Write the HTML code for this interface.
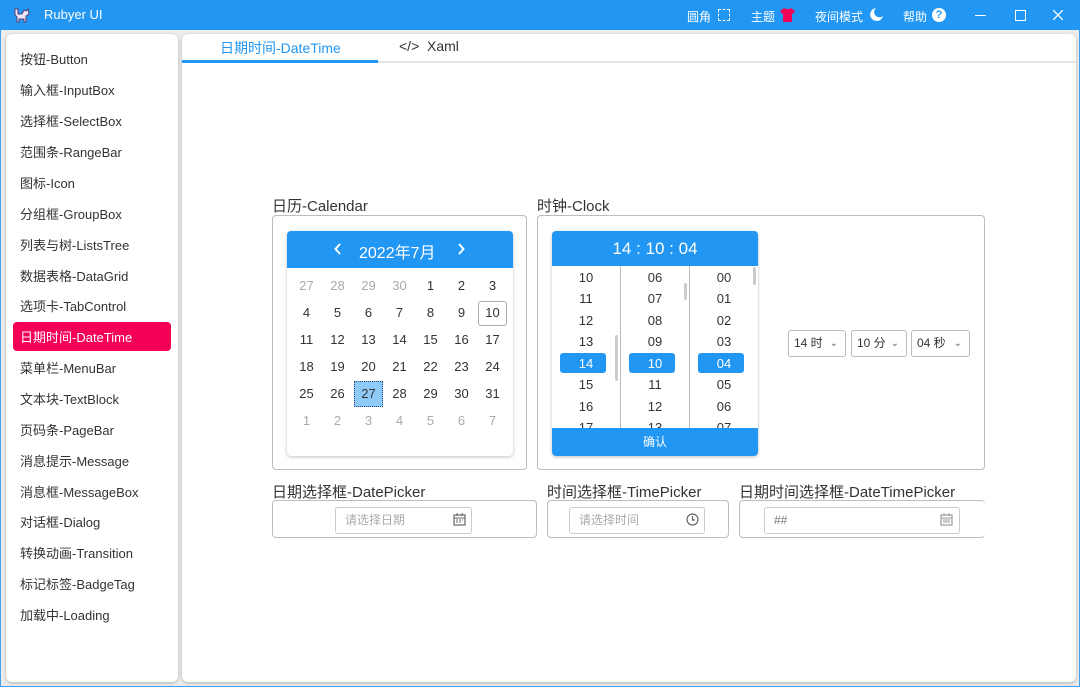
<!DOCTYPE html>
<html><head><meta charset="utf-8"><style>
*{box-sizing:border-box;margin:0;padding:0}
body{width:1080px;height:687px;overflow:hidden;background:#ececec;font-family:"Liberation Sans","Noto Sans CJK SC",sans-serif;color:#333;position:relative}
.abs{position:absolute}
.title{left:0;top:0;width:1080px;height:30px;background:#2196f3;color:#fff}
.frame{left:0;top:30px;width:1080px;height:657px;border:1px solid #3fa0f5;border-top:none}
.card{background:#fff;border-radius:6px;box-shadow:0 1px 3px rgba(0,0,0,.25)}
.nav{font-size:13px;color:#333;left:20px}
.grp{border:1px solid #bdbdbd;border-radius:4px;background:#fff}
.lbl{font-size:15px;color:#333}
.d{position:absolute;width:31px;text-align:center;font-size:13px;color:#333}
.g{color:#aaa}
.t{position:absolute;width:68px;text-align:center;font-size:13px;color:#333}
.sel{position:absolute;width:46px;height:20px;background:#2196f3;border-radius:3px}
.combo{border:1px solid #bbb;border-radius:3px;height:27px;font-size:12px;color:#333;line-height:25px;padding-left:5px;background:#fff}
.combo span{position:absolute;right:7px;top:0;font-size:10px;color:#666}
.inp{border:1px solid #ccc;border-radius:3px;height:27px;font-size:12px;color:#aaa;line-height:25px;padding-left:9px;background:#fff}
</style></head><body>
<div class="abs title">
 <svg class="abs" style="left:12px;top:5px" width="20" height="20" viewBox="0 0 20 20"><path d="M3 4 L3 10 L5 12 L5 17 L7 17 L7 14 L12 14 L12 17 L14 17 L14 11 L17 9 L16 4 L14 6 L12 5 L10 9 L6 9 L6 4 Z" fill="#eee8ff" stroke="#5a3a6a" stroke-width="1"/></svg>
 <div class="abs" style="left:44px;top:7px;font-size:13px">Rubyer UI</div>
 <div class="abs" style="left:687px;top:8px;font-size:12px">圆角</div>
 <div class="abs" style="left:718px;top:9px;width:12px;height:12px;border:1px dashed #fff"></div>
 <div class="abs" style="left:751px;top:8px;font-size:12px">主题</div>
 <svg class="abs" style="left:780px;top:8px" width="15" height="14" viewBox="0 0 15 14"><path d="M4 0 L6 1 L9 1 L11 0 L15 3 L13 6 L12 5 L12 14 L3 14 L3 5 L2 6 L0 3 Z" fill="#f50057"/></svg>
 <div class="abs" style="left:815px;top:8px;font-size:12px">夜间模式</div>
 <svg class="abs" style="left:870px;top:8px" width="13" height="13" viewBox="0 0 13 13"><path d="M6 0 A6.5 6.5 0 1 0 13 8 A5 5 0 0 1 6 0 Z" fill="#fff"/></svg>
 <div class="abs" style="left:903px;top:8px;font-size:12px">帮助</div>
 <div class="abs" style="left:932px;top:8px;width:14px;height:14px;border-radius:50%;background:#fff;color:#2196f3;font-size:11px;font-weight:bold;text-align:center;line-height:14px">?</div>
 <div class="abs" style="left:975px;top:15px;width:11px;height:1px;background:#fff"></div>
 <div class="abs" style="left:1015px;top:10px;width:11px;height:11px;border:1.5px solid #fff"></div>
 <svg class="abs" style="left:1053px;top:10px" width="10" height="10" viewBox="0 0 10 10"><path d="M0 0L10 10M10 0L0 10" stroke="#fff" stroke-width="1.3"/></svg>
</div>
<div class="abs frame"></div>
<div class="abs card" style="left:6px;top:34px;width:172px;height:648px"></div>
<div class="abs card" style="left:182px;top:34px;width:894px;height:648px"></div>
<div class="abs" style="left:182px;top:61px;width:894px;height:2px;background:#e4e4e4"></div>
<div class="abs" style="left:182px;top:60px;width:196px;height:3px;background:#2196f3"></div>
<div class="abs" style="left:220px;top:38px;font-size:14px;color:#2196f3">日期时间-DateTime</div>
<div class="abs" style="left:399px;top:38px;font-size:14px;color:#333">&lt;/&gt;&nbsp; Xaml</div>

<div class="abs" style="left:13px;top:322px;width:158px;height:29px;background:#f50057;border-radius:4px"></div>
<div class="abs nav" style="top:49px">按钮-Button</div>
<div class="abs nav" style="top:80px">输入框-InputBox</div>
<div class="abs nav" style="top:111px">选择框-SelectBox</div>
<div class="abs nav" style="top:142px">范围条-RangeBar</div>
<div class="abs nav" style="top:173px">图标-Icon</div>
<div class="abs nav" style="top:204px">分组框-GroupBox</div>
<div class="abs nav" style="top:235px">列表与树-ListsTree</div>
<div class="abs nav" style="top:266px">数据表格-DataGrid</div>
<div class="abs nav" style="top:296px">选项卡-TabControl</div>
<div class="abs nav" style="top:327px;color:#fff">日期时间-DateTime</div>
<div class="abs nav" style="top:358px">菜单栏-MenuBar</div>
<div class="abs nav" style="top:389px">文本块-TextBlock</div>
<div class="abs nav" style="top:420px">页码条-PageBar</div>
<div class="abs nav" style="top:451px">消息提示-Message</div>
<div class="abs nav" style="top:482px">消息框-MessageBox</div>
<div class="abs nav" style="top:512px">对话框-Dialog</div>
<div class="abs nav" style="top:543px">转换动画-Transition</div>
<div class="abs nav" style="top:574px">标记标签-BadgeTag</div>
<div class="abs nav" style="top:605px">加载中-Loading</div>

<!-- Calendar -->
<div class="abs lbl" style="left:272px;top:195px">日历-Calendar</div>
<div class="abs grp" style="left:272px;top:215px;width:255px;height:255px"></div>
<div class="abs card" style="left:287px;top:231px;width:226px;height:225px;border-radius:4px"></div>
<div class="abs" style="left:287px;top:231px;width:226px;height:37px;background:#2196f3;border-radius:4px 4px 0 0;color:#fff">
 <svg class="abs" style="left:47px;top:12px" width="8" height="12" viewBox="0 0 8 12"><path d="M6 1L1.5 6L6 11" fill="none" stroke="#fff" stroke-width="2"/></svg>
 <div class="abs" style="left:72px;top:8px;font-size:16px">2022年7月</div>
 <svg class="abs" style="left:170px;top:12px" width="8" height="12" viewBox="0 0 8 12"><path d="M2 1L6.5 6L2 11" fill="none" stroke="#fff" stroke-width="2"/></svg>
</div>
<div class="abs" style="left:478px;top:301px;width:29px;height:25px;border:1px solid #aaa;border-radius:3px"></div>
<div class="abs" style="left:354px;top:381px;width:29px;height:26px;background:#90caf9;border:1px dotted #1a4a7a"></div>
<div id="cal"></div>

<!-- Clock -->
<div class="abs lbl" style="left:537px;top:195px">时钟-Clock</div>
<div class="abs grp" style="left:537px;top:215px;width:448px;height:255px"></div>
<div class="abs card" style="left:552px;top:231px;width:206px;height:225px;border-radius:4px;overflow:hidden">
 <div class="abs" style="left:0;top:0;width:206px;height:35px;background:#2196f3;color:#fff;font-size:17px;text-align:center;line-height:35px">14 : 10 : 04</div>
 <div class="abs" style="left:68px;top:35px;width:1px;height:162px;background:#bbb"></div>
 <div class="abs" style="left:137px;top:35px;width:1px;height:162px;background:#bbb"></div>
 <div class="abs" style="left:63px;top:104px;width:3px;height:46px;background:#ccc;border-radius:2px"></div>
 <div class="abs" style="left:132px;top:52px;width:3px;height:17px;background:#ccc;border-radius:2px"></div>
 <div class="abs" style="left:201px;top:36px;width:3px;height:18px;background:#ccc;border-radius:2px"></div>
 <div class="sel" style="left:8px;top:122px"></div><div class="sel" style="left:77px;top:122px"></div><div class="sel" style="left:146px;top:122px"></div>
 <div id="clk"></div>
 <div class="abs" style="left:0;top:197px;width:206px;height:28px;background:#2196f3;color:#fff;font-size:12px;text-align:center;line-height:28px">确认</div>
</div>
<div class="abs combo" style="left:788px;top:330px;width:58px">14 时<span>⌄</span></div>
<div class="abs combo" style="left:851px;top:330px;width:56px">10 分<span>⌄</span></div>
<div class="abs combo" style="left:911px;top:330px;width:59px">04 秒<span>⌄</span></div>

<!-- Pickers -->
<div class="abs lbl" style="left:272px;top:481px">日期选择框-DatePicker</div>
<div class="abs lbl" style="left:547px;top:481px">时间选择框-TimePicker</div>
<div class="abs lbl" style="left:739px;top:481px">日期时间选择框-DateTimePicker</div>
<div class="abs grp" style="left:272px;top:500px;width:265px;height:38px"></div>
<div class="abs grp" style="left:547px;top:500px;width:182px;height:38px"></div>
<div class="abs grp" style="left:739px;top:500px;width:246px;height:38px;border-right:none"></div>
<div class="abs inp" style="left:335px;top:507px;width:137px">请选择日期</div>
<div class="abs inp" style="left:569px;top:507px;width:136px">请选择时间</div>
<div class="abs inp" style="left:764px;top:507px;width:196px;color:#777">##</div>
<svg class="abs" style="left:453px;top:513px" width="13" height="13" viewBox="0 0 13 13"><rect x="1" y="2" width="11" height="10" fill="none" stroke="#666" stroke-width="1.2"/><path d="M1 5h11M4 0v3M9 0v3M3 7h2M6 7h2M9 7h1M3 9h2M6 9h2" stroke="#666"/></svg>
<svg class="abs" style="left:686px;top:513px" width="13" height="13" viewBox="0 0 13 13"><circle cx="6.5" cy="6.5" r="5.5" fill="none" stroke="#666" stroke-width="1.2"/><path d="M6.5 3v4h2.5" fill="none" stroke="#666" stroke-width="1.2"/></svg>
<svg class="abs" style="left:940px;top:513px" width="13" height="13" viewBox="0 0 13 13"><rect x="1" y="2" width="11" height="10" fill="none" stroke="#999" stroke-width="1.2"/><path d="M1 5h11M4 0v3M9 0v3M3 7h7M3 9h7" stroke="#999"/></svg>

<script>
var rows=[[27,28,29,30,1,2,3],[4,5,6,7,8,9,10],[11,12,13,14,15,16,17],[18,19,20,21,22,23,24],[25,26,27,28,29,30,31],[1,2,3,4,5,6,7]];
var h='';
rows.forEach(function(r,i){r.forEach(function(v,j){var g=(i==0&&j<4)||i==5;h+='<div class="d'+(g?' g':'')+'" style="left:'+(291+j*31)+'px;top:'+(278+i*27)+'px">'+v+'</div>';});});
document.getElementById('cal').outerHTML=h;
var cols=[[10,11,12,13,14,15,16,17],['06','07','08','09',10,11,12,13],['00','01','02','03','04','05','06','07']];
h='';
cols.forEach(function(c,j){c.forEach(function(v,i){h+='<div class="t" style="left:'+(j*69)+'px;top:'+(38.5+i*21.5)+'px;'+(i==4?'color:#fff':'')+'">'+v+'</div>';});});
document.getElementById('clk').outerHTML=h;
</script>
</body></html>
